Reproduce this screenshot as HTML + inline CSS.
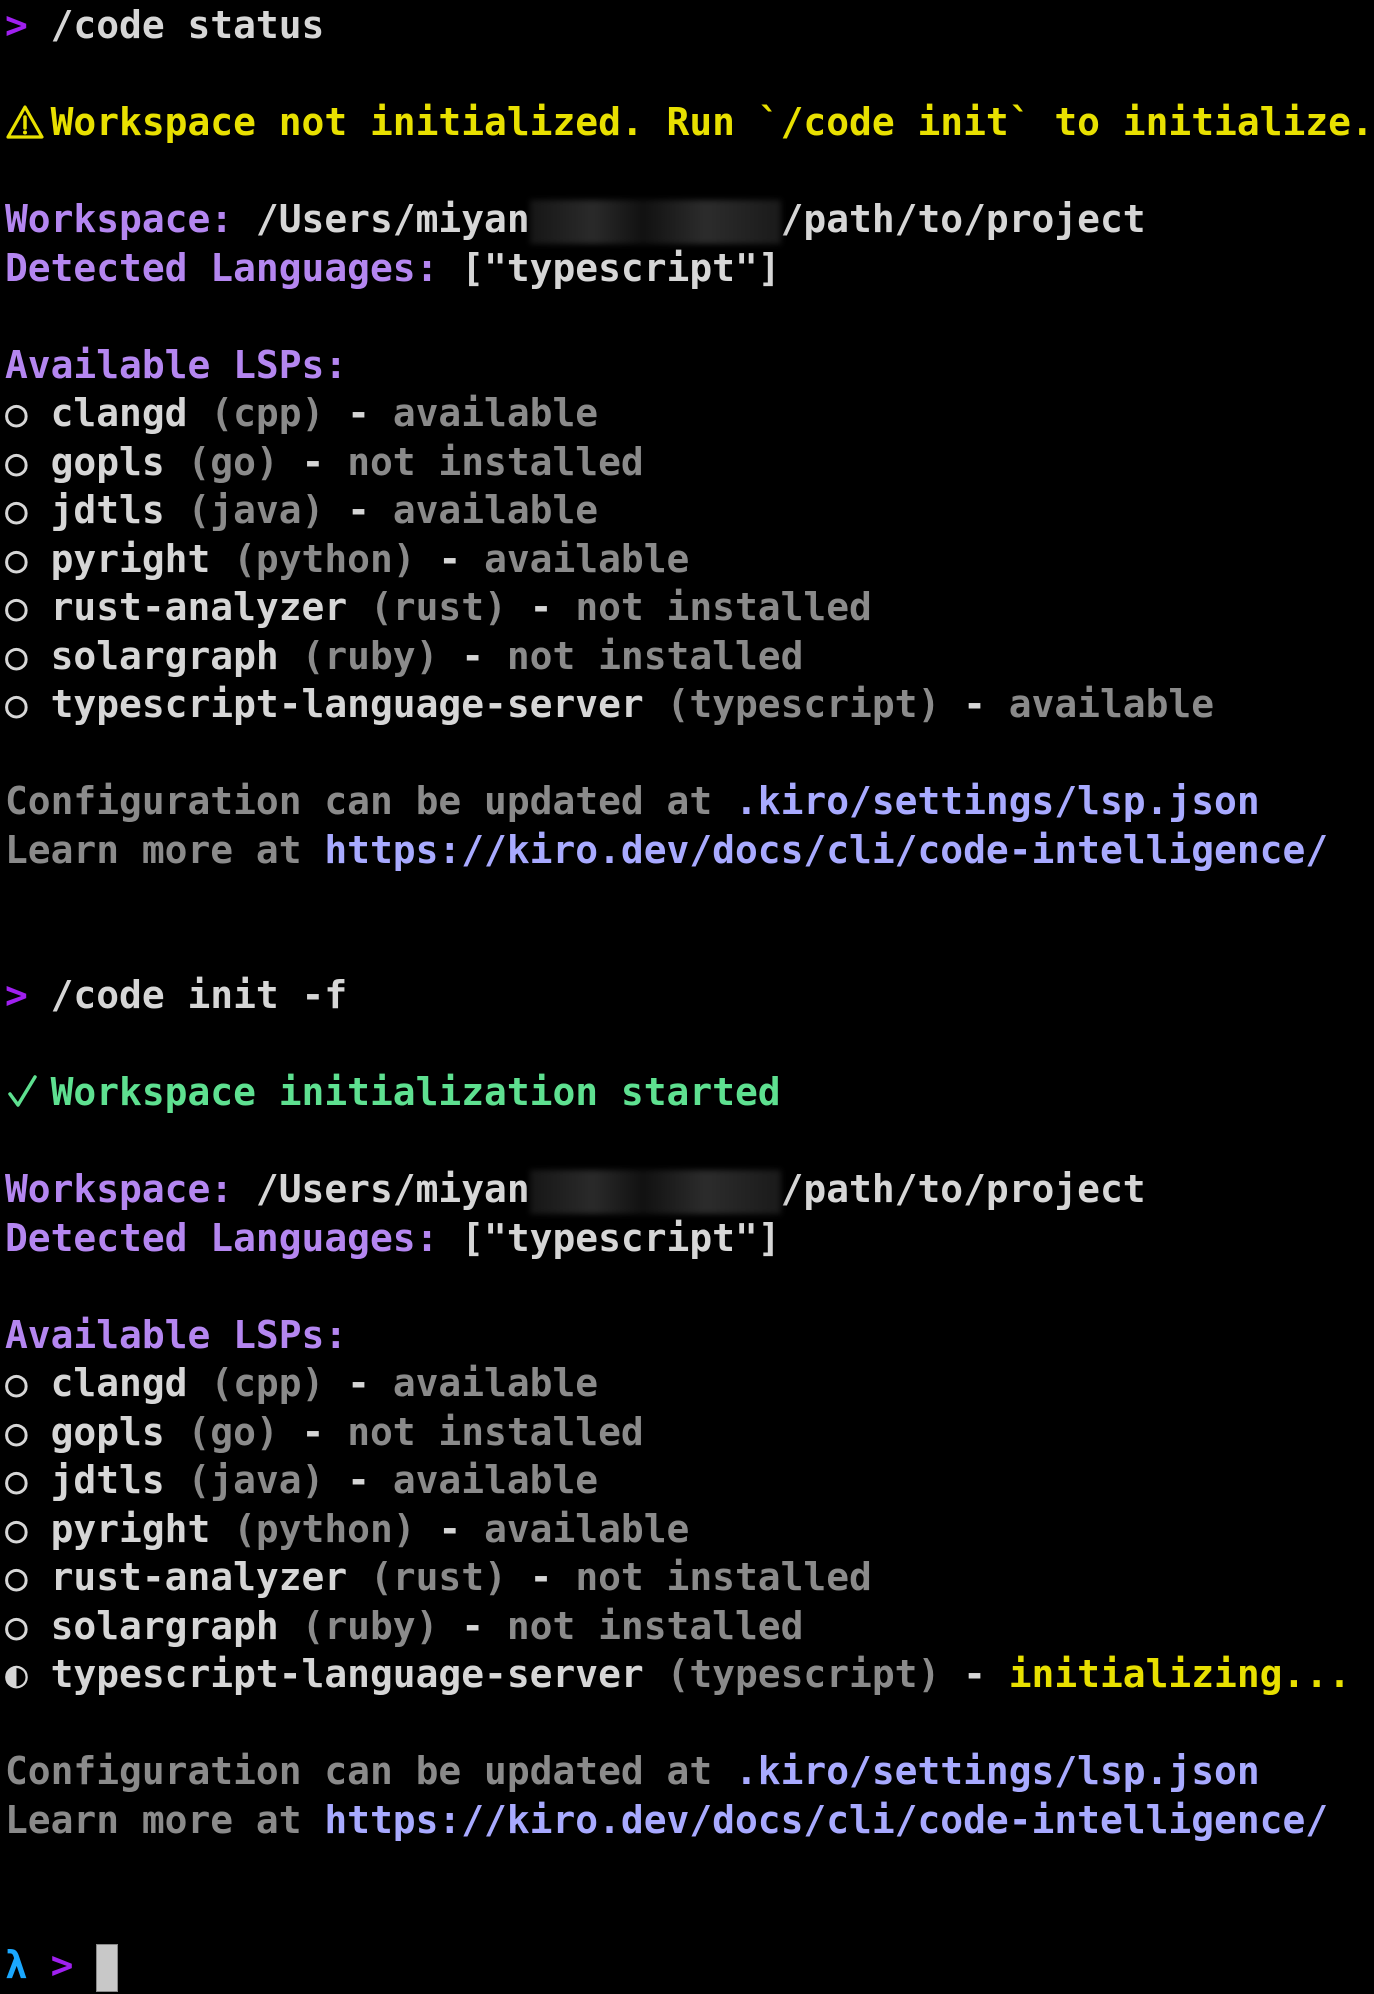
<!DOCTYPE html>
<html><head><meta charset="utf-8"><style>
html,body{margin:0;padding:0;background:#000;}
body{width:1374px;height:1994px;overflow:hidden;font-family:"DejaVu Sans Mono","Liberation Mono",monospace;font-size:37.9px;font-weight:bold;color:#d6d6d6;}
#t{padding:1px 0 0 5px;}
.l{height:48.5px;line-height:48.5px;white-space:pre;}
.p{color:#a020f0}.y{color:#e8e000}.v{color:#b486f0}.g{color:#8a8a8a}.w{color:#d6d6d6}
.k{color:#a8aaff}.gr{color:#5ee090}.c{color:#1aa8ff}
.i{display:inline-block;width:2ch;vertical-align:top;height:48px;position:relative;}
.i svg{position:absolute;left:0;top:6px;}
.blur{display:inline-block;width:11ch;height:44px;vertical-align:middle;background:linear-gradient(90deg,#161616,#2a2a2a 25%,#111 45%,#2c2c2c 70%,#1a1a1a);filter:blur(3px);}
.cur{display:inline-block;width:22px;height:48px;background:#c8c8c8;vertical-align:middle;border:1px solid #888;box-sizing:border-box;}
</style></head><body><div id="t">
<div class="l"><span class="p">&gt;</span> /code status</div>
<div class="l"></div>
<div class="l y"><span class="i"><svg width="40" height="36" viewBox="0 0 40 36"><path d="M20 3 L37 33 L3 33 Z" fill="none" stroke="#e8e000" stroke-width="3.2" stroke-linejoin="round"/><path d="M20 13 V24" stroke="#e8e000" stroke-width="3.5" stroke-linecap="round"/><circle cx="20" cy="28.5" r="2" fill="#e8e000"/></svg></span>Workspace not initialized. Run `/code init` to initialize.</div>
<div class="l"></div>
<div class="l"><span class="v">Workspace:</span> /Users/miyan<span class="blur"></span>/path/to/project</div>
<div class="l"><span class="v">Detected Languages:</span> ["typescript"]</div>
<div class="l"></div>
<div class="l v">Available LSPs:</div>
<div class="l">○ clangd <span class="g">(cpp)</span> - <span class="g">available</span></div>
<div class="l">○ gopls <span class="g">(go)</span> - <span class="g">not installed</span></div>
<div class="l">○ jdtls <span class="g">(java)</span> - <span class="g">available</span></div>
<div class="l">○ pyright <span class="g">(python)</span> - <span class="g">available</span></div>
<div class="l">○ rust-analyzer <span class="g">(rust)</span> - <span class="g">not installed</span></div>
<div class="l">○ solargraph <span class="g">(ruby)</span> - <span class="g">not installed</span></div>
<div class="l">○ typescript-language-server <span class="g">(typescript)</span> - <span class="g">available</span></div>
<div class="l"></div>
<div class="l g">Configuration can be updated at <span class="k">.kiro/settings/lsp.json</span></div>
<div class="l g">Learn more at <span class="k">https://kiro.dev/docs/cli/code-intelligence/</span></div>
<div class="l"></div>
<div class="l"></div>
<div class="l"><span class="p">&gt;</span> /code init -f</div>
<div class="l"></div>
<div class="l gr"><span class="i"><svg width="40" height="36" viewBox="0 0 40 36"><path d="M5 20 L13 31 L30 3" fill="none" stroke="#5ee090" stroke-width="3.5" stroke-linecap="round" stroke-linejoin="round"/></svg></span>Workspace initialization started</div>
<div class="l"></div>
<div class="l"><span class="v">Workspace:</span> /Users/miyan<span class="blur"></span>/path/to/project</div>
<div class="l"><span class="v">Detected Languages:</span> ["typescript"]</div>
<div class="l"></div>
<div class="l v">Available LSPs:</div>
<div class="l">○ clangd <span class="g">(cpp)</span> - <span class="g">available</span></div>
<div class="l">○ gopls <span class="g">(go)</span> - <span class="g">not installed</span></div>
<div class="l">○ jdtls <span class="g">(java)</span> - <span class="g">available</span></div>
<div class="l">○ pyright <span class="g">(python)</span> - <span class="g">available</span></div>
<div class="l">○ rust-analyzer <span class="g">(rust)</span> - <span class="g">not installed</span></div>
<div class="l">○ solargraph <span class="g">(ruby)</span> - <span class="g">not installed</span></div>
<div class="l">◐ typescript-language-server <span class="g">(typescript)</span> - <span class="y">initializing...</span></div>
<div class="l"></div>
<div class="l g">Configuration can be updated at <span class="k">.kiro/settings/lsp.json</span></div>
<div class="l g">Learn more at <span class="k">https://kiro.dev/docs/cli/code-intelligence/</span></div>
<div class="l"></div>
<div class="l"></div>
<div class="l"><span class="c">λ</span> <span class="p">&gt;</span> <span class="cur"></span></div>
</div></body></html>
